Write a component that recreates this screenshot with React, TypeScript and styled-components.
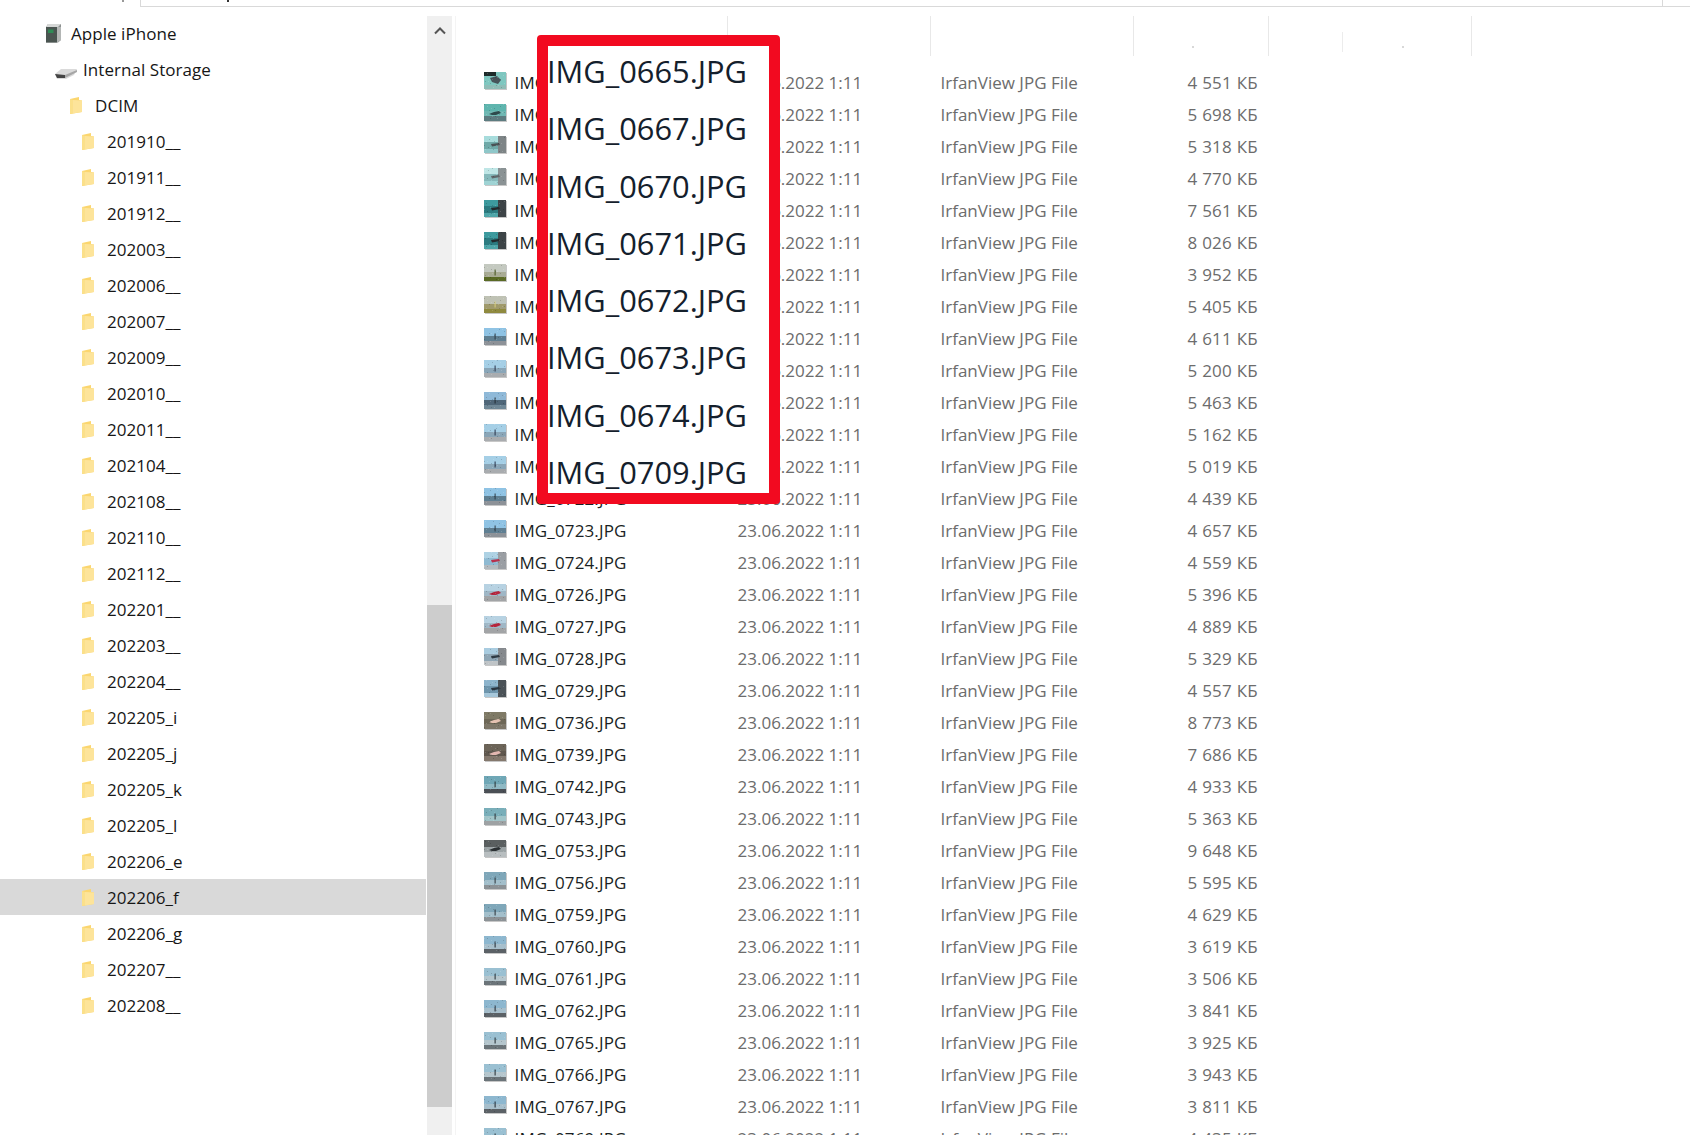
import React from "react";
import styled, { createGlobalStyle } from "styled-components";

const Global = createGlobalStyle`
  html, body { margin: 0; padding: 0; background: #fff; overflow: hidden; }
  #root { width: 1690px; height: 1135px; }
  * { box-sizing: border-box; }
`;

const Page = styled.div`
  position: relative;
  width: 1690px;
  height: 1135px;
  overflow: hidden;
  display: flex;
  flex-direction: column;
  font-family: "Open Sans", "Noto Sans", sans-serif;
  font-size: 17px;
  color: #1b1b1b;
  background: #fff;
`;

const TopBar = styled.div`
  display: flex;
  height: 7px;
  flex: none;
`;
const TopLeft = styled.div`
  width: 140px;
  padding-left: 122px;
`;
const AddressBox = styled.div`
  width: 1522px;
  border-left: 1px solid #d9d9d9;
  border-bottom: 1.5px solid #d9d9d9;
  padding-left: 86px;
`;
const TopRight = styled.div`
  flex: 1;
  border-left: 1px solid #d9d9d9;
  border-bottom: 1.5px solid #d9d9d9;
`;
const Tick = styled.div<{ $dark?: boolean }>`
  width: 2px;
  height: 2px;
  background: ${(p) => (p.$dark ? "#333" : "#999")};
`;

const Body = styled.div`
  flex: 1;
  display: flex;
  min-height: 0;
  padding-top: 9px;
`;

const Tree = styled.nav`
  width: 427px;
  flex: none;
  margin-top: -1px;
  display: flex;
  flex-direction: column;
`;
const TreeRow = styled.div<{ $depth: number; $selected?: boolean }>`
  height: 36px;
  flex: none;
  width: 426px;
  display: flex;
  align-items: center;
  padding-left: ${(p) => 45 + (p.$depth - 1) * 12}px;
  background: ${(p) => (p.$selected ? "#d9d9d9" : "transparent")};
  color: #161616;
`;
const TreeIcon = styled.span<{ $shift?: number }>`
  width: 26px;
  height: 20px;
  flex: none;
  display: flex;
  align-items: center;
  transform: translateX(${(p) => p.$shift ?? 0}px);
  svg { filter: blur(0.25px); }
`;
const TreeLabel = styled.span`
  white-space: pre;
  letter-spacing: 0.05px;
`;

const ScrollTrack = styled.div`
  width: 25px;
  flex: none;
  background: #f0f0f0;
  display: flex;
  flex-direction: column;
  align-items: stretch;
`;
const ScrollButton = styled.div`
  height: 28px;
  display: flex;
  align-items: center;
  justify-content: center;
  color: #555;
`;
const ScrollThumb = styled.div`
  margin-top: 561px;
  height: 502px;
  background: #cdcdcd;
`;

const Details = styled.main`
  flex: 1;
  min-width: 0;
  display: flex;
  flex-direction: column;
  border-left: 1px solid #f4f4f4;
  margin-left: 3px;
`;
const Header = styled.div`
  display: flex;
  height: 40px;
  flex: none;
`;
const HeaderCell = styled.div<{ $w: number }>`
  width: ${(p) => p.$w}px;
  flex: none;
  border-right: 1px solid #e8e8e8;
  display: flex;
  align-items: flex-end;
  justify-content: center;
`;
const ShortCell = styled.div<{ $w: number }>`
  width: ${(p) => p.$w}px;
  flex: none;
  margin-top: 16px;
  height: 20px;
  border-right: 1px solid #ececec;
`;
const Speck = styled.i<{ $back: number }>`
  width: 2px;
  height: 2px;
  margin-bottom: 8px;
  margin-right: ${(p) => p.$back}px;
  background: #d8d8d8;
`;

const List = styled.div`
  padding-top: 10px;
  display: flex;
  flex-direction: column;
`;
const FileRow = styled.div`
  height: 32px;
  flex: none;
  display: grid;
  grid-template-columns: 22px 223px 203px 160px 166px;
  padding-left: 28px;
  align-items: center;
`;
const ThumbBox = styled.span`
  width: 22px;
  height: 17px;
  display: block;
  margin-top: -4px;
  filter: drop-shadow(1px 1px 0.6px rgba(0, 0, 0, 0.22));
  svg { display: block; filter: blur(0.3px); }
`;
const NameCell = styled.span`
  margin-left: 8.5px;
  color: #1a1f24;
  white-space: nowrap;
  letter-spacing: 0.14px;
`;
const MutedCell = styled.span`
  color: #6c6c6c;
  white-space: nowrap;
  margin-left: 8.5px;
`;
const SizeCell = styled.span`
  color: #6c6c6c;
  white-space: nowrap;
  text-align: right;
  letter-spacing: 0.25px;
`;

const Callout = styled.div`
  position: absolute;
  left: 537px;
  top: 35px;
  width: 243px;
  height: 469px;
  border: 11px solid #f20a20;
  border-radius: 4px;
  background: #fff;
  display: flex;
  flex-direction: column;
  gap: 7.3px;
`;
const CalloutLine = styled.div`
  height: 50px;
  flex: none;
  line-height: 50px;
  font-size: 30.8px;
  color: #14202c;
  white-space: nowrap;
  margin-left: -1px;
`;

const PhoneIcon = () => (
  <svg width="18" height="20" viewBox="0 0 18 20">
    <path d="M3 1h13v16l-3 2.5H1V4z" fill="#8d9190" />
    <path d="M1 4l2-3h13l-3 3z" fill="#d5d7d6" />
    <rect x="1" y="4" width="11" height="15.5" fill="#4a5551" />
    <rect x="3" y="6.5" width="5.5" height="3.5" fill="#2f8a55" />
    <path d="M12 4h4v13l-4 2.5z" fill="#b3b6b5" />
  </svg>
);
const DriveIcon = () => (
  <svg width="24" height="22" viewBox="0 0 24 22">
    <path d="M1 16l6-5h16l-3 6-8 4H3z" fill="#dadada" />
    <path d="M1 16l10 1v3H3z" fill="#444" />
    <path d="M11 17l12-5v2l-12 6z" fill="#a6a6a6" />
  </svg>
);
const FolderIcon = () => (
  <svg width="15" height="19" viewBox="0 0 15 19">
    <path d="M1 3l9-2v3l3 .5V16L4 17.5 1 18z" fill="#fbd66f" />
    <path d="M4 4l9 .5V16l-9 1.5z" fill="#fde49a" />
    <path d="M1 3l3 1v13.5L1 18z" fill="#fbe08a" />
  </svg>
);

type Pal = {
  a: string; // top
  b: string; // middle
  c: string; // bottom
  d: string; // subject
  e?: string; // right block of split scenes
  k: "beach" | "split" | "rock" | "block";
};
const P: Record<string, Pal> = {
  t1: { a: "#1e2b2a", b: "#7fc7c0", c: "#8fbdb7", d: "#47545a", k: "block" },
  t2: { a: "#5fb5ae", b: "#6fb8b3", c: "#5d7c80", d: "#2f4a4c", k: "rock" },
  t3: { a: "#a7dcdc", b: "#6fa9a8", c: "#8fc7c9", d: "#4a5255", e: "#7d8486", k: "split" },
  t4: { a: "#bfe6e6", b: "#86b9bb", c: "#9fd3d4", d: "#5f676a", e: "#8a9294", k: "split" },
  t5: { a: "#3d9a9e", b: "#2c7b80", c: "#4ea5a8", d: "#23292c", e: "#3d4447", k: "split" },
  f1: { a: "#c4c9c0", b: "#a8ab94", c: "#5a6a25", d: "#46551c", k: "beach" },
  f2: { a: "#bfc2b4", b: "#a09a6c", c: "#8f8a3f", d: "#d8cf7e", k: "beach" },
  b1: { a: "#8fc3e4", b: "#5f7f92", c: "#8d9298", d: "#2c3a44", k: "beach" },
  b2: { a: "#a5cfe6", b: "#8aa6b8", c: "#a9acaf", d: "#27334a", k: "beach" },
  b3: { a: "#8fb9d8", b: "#4f6678", c: "#6f8796", d: "#222c33", k: "beach" },
  r1: { a: "#b7d2e2", b: "#9fb7c6", c: "#a2a4a6", d: "#b5263d", k: "rock" },
  w1: { a: "#aed2e4", b: "#8fbad2", c: "#b3babf", d: "#b8304c", e: "#9a9ea3", k: "split" },
  w2: { a: "#a9cce0", b: "#8fa6b5", c: "#bfc4c7", d: "#2e3a44", e: "#85898d", k: "split" },
  w3: { a: "#8db4cc", b: "#6e95ac", c: "#a6c7da", d: "#2a3540", e: "#4b5257", k: "split" },
  m1: { a: "#7f7a66", b: "#6d6757", c: "#7d7668", d: "#e5c2b2", k: "rock" },
  m2: { a: "#6c6458", b: "#5f574e", c: "#84786d", d: "#e3b7b1", k: "rock" },
  c1: { a: "#6fa7b6", b: "#8fb9c4", c: "#4a4f55", d: "#27302f", k: "beach" },
  c2: { a: "#79aeb9", b: "#a1c4c8", c: "#9ea2a4", d: "#2a2f33", k: "beach" },
  g1: { a: "#5a5f60", b: "#9ba3a5", c: "#b8bec0", d: "#2b3033", k: "rock" },
  g2: { a: "#7fa7b9", b: "#a3bfcb", c: "#8c9296", d: "#2c3338", k: "beach" },
  s1: { a: "#8db7cf", b: "#a7bfcc", c: "#5b6166", d: "#1f2730", k: "beach" },
  s2: { a: "#9ac0d2", b: "#b5c6cd", c: "#6b7479", d: "#222a30", k: "beach" },
};

// Fixed pseudo-random speckle so each thumbnail reads as a tiny photo.
const speckle = (seed: number) =>
  Array.from({ length: 16 }, (_, i) => {
    const x = (seed * 7 + i * 13) % 21;
    const y = (seed * 3 + i * i * 5 + i * 3) % 16;
    return { x, y, light: (i + seed) % 2 === 0 };
  });

const Thumb = ({ kind, seed }: { kind: string; seed: number }) => {
  const p = P[kind];
  return (
    <svg width="22" height="17" viewBox="0 0 22 17">
      {p.k === "beach" && (
        <>
          <rect width="22" height="8" fill={p.a} />
          <rect y="8" width="22" height="5" fill={p.b} />
          <rect y="13" width="22" height="4" fill={p.c} />
          <path d="M10.6 5.5h1v6h-1z" fill={p.d} />
        </>
      )}
      {p.k === "split" && (
        <>
          <rect width="22" height="17" fill={p.a} />
          <rect y="6" width="14" height="7" fill={p.b} />
          <rect y="13" width="14" height="4" fill={p.c} />
          <rect x="14" width="8" height="17" fill={p.e} />
          <path d="M7 8l8-1 1 2-8 1.5z" fill={p.d} />
        </>
      )}
      {p.k === "rock" && (
        <>
          <rect width="22" height="17" fill={p.a} />
          <rect y="7" width="22" height="5" fill={p.b} />
          <rect y="12" width="22" height="5" fill={p.c} />
          <path d="M5 10l5-2 5-1 2 2-5 2-4 0z" fill={p.d} />
        </>
      )}
      {p.k === "block" && (
        <>
          <rect width="22" height="17" fill={p.b} />
          <rect width="12" height="4" fill={p.a} />
          <rect y="13" width="22" height="4" fill={p.c} />
          <path d="M6 6l7-2 4 4-3 4-6-2z" fill={p.d} />
        </>
      )}
      {speckle(seed).map((s, i) => (
        <rect
          key={i}
          x={s.x}
          y={s.y}
          width="1"
          height="1"
          fill={s.light ? "#fff" : "#000"}
          opacity="0.16"
        />
      ))}
    </svg>
  );
};

const folders = [
  "201910__", "201911__", "201912__", "202003__", "202006__", "202007__", "202009__",
  "202010__", "202011__", "202104__", "202108__", "202110__", "202112__", "202201__",
  "202203__", "202204__", "202205_i", "202205_j", "202205_k", "202205_l", "202206_e",
  "202206_f", "202206_g", "202207__", "202208__",
];

const files: [string, string, string][] = [
  ["0665", "4 551", "t1"], ["0667", "5 698", "t2"], ["0670", "5 318", "t3"], ["0671", "4 770", "t4"],
  ["0672", "7 561", "t5"], ["0673", "8 026", "t5"], ["0674", "3 952", "f1"], ["0709", "5 405", "f2"],
  ["0710", "4 611", "b1"], ["0711", "5 200", "b2"], ["0712", "5 463", "b3"], ["0714", "5 162", "b2"],
  ["0716", "5 019", "b2"], ["0722", "4 439", "b1"], ["0723", "4 657", "b1"], ["0724", "4 559", "w1"],
  ["0726", "5 396", "r1"], ["0727", "4 889", "r1"], ["0728", "5 329", "w2"], ["0729", "4 557", "w3"],
  ["0736", "8 773", "m1"], ["0739", "7 686", "m2"], ["0742", "4 933", "c1"], ["0743", "5 363", "c2"],
  ["0753", "9 648", "g1"], ["0756", "5 595", "g2"], ["0759", "4 629", "g2"], ["0760", "3 619", "s1"],
  ["0761", "3 506", "s2"], ["0762", "3 841", "s1"], ["0765", "3 925", "s2"], ["0766", "3 943", "s2"],
  ["0767", "3 811", "s1"], ["0769", "4 435", "s2"],
];

const callout = ["0665", "0667", "0670", "0671", "0672", "0673", "0674", "0709"];

export default function App() {
  return (
    <Page>
      <Global />
      <TopBar>
        <TopLeft><Tick /></TopLeft>
        <AddressBox><Tick $dark /></AddressBox>
        <TopRight />
      </TopBar>
      <Body>
        <Tree>
          <TreeRow $depth={1}>
            <TreeIcon><PhoneIcon /></TreeIcon>
            <TreeLabel>Apple iPhone</TreeLabel>
          </TreeRow>
          <TreeRow $depth={2}>
            <TreeIcon $shift={-3}><DriveIcon /></TreeIcon>
            <TreeLabel>Internal Storage</TreeLabel>
          </TreeRow>
          <TreeRow $depth={3}>
            <TreeIcon><FolderIcon /></TreeIcon>
            <TreeLabel>DCIM</TreeLabel>
          </TreeRow>
          {folders.map((f) => (
            <TreeRow key={f} $depth={4} $selected={f === "202206_f"}>
              <TreeIcon><FolderIcon /></TreeIcon>
              <TreeLabel>{f}</TreeLabel>
            </TreeRow>
          ))}
        </Tree>
        <ScrollTrack>
          <ScrollButton>
            <svg width="14" height="9" viewBox="0 0 14 9">
              <polyline points="2,7.5 7,2.5 12,7.5" fill="none" stroke="#555" strokeWidth="2" />
            </svg>
          </ScrollButton>
          <ScrollThumb />
        </ScrollTrack>
        <Details>
          <Header>
            <HeaderCell $w={272} />
            <HeaderCell $w={203} />
            <HeaderCell $w={203} />
            <HeaderCell $w={135}><Speck $back={16} /></HeaderCell>
            <ShortCell $w={74} />
            <HeaderCell $w={129}><Speck $back={8} /></HeaderCell>
          </Header>
          <List>
            {files.map(([n, s, t], i) => (
              <FileRow key={n}>
                <ThumbBox><Thumb kind={t} seed={i + 1} /></ThumbBox>
                <NameCell>IMG_{n}.JPG</NameCell>
                <MutedCell>23.06.2022 1:11</MutedCell>
                <MutedCell>IrfanView JPG File</MutedCell>
                <SizeCell>{s} КБ</SizeCell>
              </FileRow>
            ))}
          </List>
        </Details>
      </Body>
      <Callout>
        {callout.map((n) => (
          <CalloutLine key={n}>IMG_{n}.JPG</CalloutLine>
        ))}
      </Callout>
    </Page>
  );
}
